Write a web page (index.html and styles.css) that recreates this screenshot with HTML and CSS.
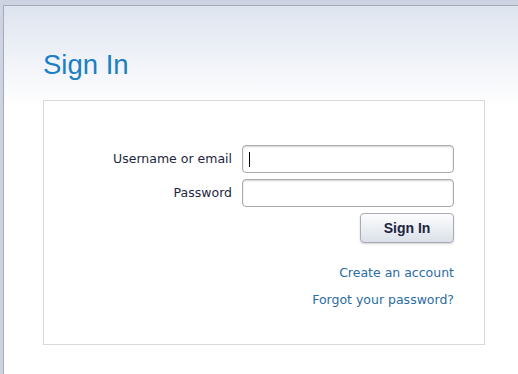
FILE: index.html
```html
<!DOCTYPE html>
<html lang="en">
<head>
  <meta charset="UTF-8" />
  <title>Sign In</title>
  <meta name="viewport" content="width=device-width, initial-scale=1.0" />
  <link rel="stylesheet" href="styles.css">
</head>
<body>
  <div class="page">
    <h1>Sign In</h1>

    <div class="panel">
      <form class="login-form">
        <label for="login">Username or email</label>
        <div class="field">
          <input type="text" id="login" name="login" />
          <span class="caret"></span>
        </div>

        <label for="password">Password</label>
        <div class="field">
          <input type="password" id="password" name="password" />
        </div>

        <div class="actions">
          <button type="submit">Sign In</button>
        </div>
      </form>

      <div class="links">
        <a href="#">Create an account</a>
        <a href="#">Forgot your password?</a>
      </div>
    </div>
  </div>
</body>
</html>
```

FILE: styles.css
```css
* {
  box-sizing: border-box;
  margin: 0;
  padding: 0;
}

html,
body {
  height: 100%;
}

body {
  background: #cdd3e1;
  padding: 5px 0 0 3px;
  font-family: 'DejaVu Sans', 'Liberation Sans', sans-serif;
  font-size: 12.5px;
  color: #1d2740;
  overflow: hidden;
}

.page {
  height: 100%;
  border-top: 1px solid #a6abb8;
  border-left: 1px solid #a6abb8;
  background: linear-gradient(#dee4ef, #ffffff 100px);
  padding: 45px 0 0 39px;
}

h1 {
  font-family: 'Liberation Sans', Arial, sans-serif;
  font-weight: normal;
  font-size: 27.5px;
  line-height: 28px;
  color: #1a7fc4;
  margin-bottom: 21px;
}

.panel {
  width: 442px;
  height: 245px;
  background: #fff;
  border: 1px solid #d9d9d9;
  padding: 44px 30px 0 0;
}

.login-form {
  display: grid;
  grid-template-columns: 1fr 212px;
  column-gap: 10px;
  row-gap: 6px;
  align-items: center;
}

.login-form label {
  text-align: right;
  padding-bottom: 1px;
}

.field {
  position: relative;
}

.field input {
  display: block;
  width: 100%;
  height: 28px;
  border: 1px solid #aaaaaa;
  border-radius: 4px;
  background: #fff;
  box-shadow: inset 0 1px 2px rgba(0, 0, 0, 0.18);
  outline: none;
  padding: 0 7px;
  font: inherit;
}

.caret {
  position: absolute;
  left: 7px;
  top: 7px;
  width: 1px;
  height: 15px;
  background: #000;
}

.actions {
  grid-column: 2;
  display: flex;
  justify-content: flex-end;
}

.actions button {
  width: 94px;
  height: 30px;
  border: 1px solid #a9acb2;
  border-radius: 4px;
  background: linear-gradient(#fdfdfe, #dbe0e8);
  box-shadow: 0 1px 2px rgba(0, 0, 0, 0.18);
  font-family: 'Liberation Sans', Arial, sans-serif;
  font-weight: bold;
  font-size: 14px;
  color: #1c2541;
  cursor: pointer;
}

.links {
  margin-top: 16px;
  display: flex;
  flex-direction: column;
  align-items: flex-end;
}

.links a {
  line-height: 27px;
  color: #2a6ca4;
  text-decoration: none;
}
```
